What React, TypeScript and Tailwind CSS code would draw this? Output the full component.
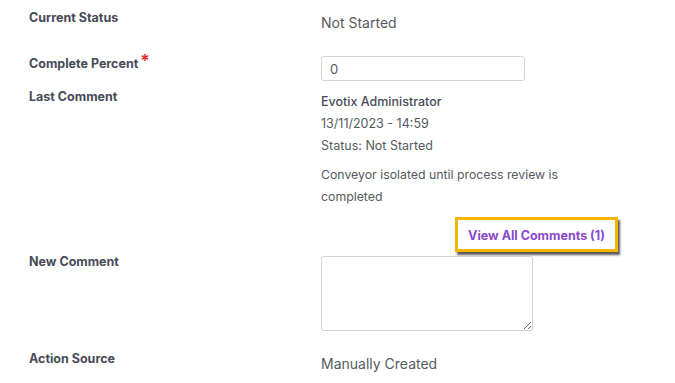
import { FC } from 'react';

const Label: FC<{ text: string; required?: boolean }> = ({ text, required }) => (
  <div className="w-[292px] shrink-0 text-[12.5px] leading-[16px] font-bold text-[#474b57]">
    {text}
    {required && <span className="text-[#e0322d] text-[17px] leading-none relative top-[-1px] ml-[2px]">*</span>}
  </div>
);

const App: FC = () => {
  return (
    <div className="w-[675px] h-[383px] bg-white pl-[29px] pt-[10px] overflow-hidden font-['Inter','Liberation_Sans',sans-serif]">
      <div className="flex h-[44px]">
        <Label text="Current Status" />
        <div className="pt-[3px] text-[14px] leading-[20px] text-[#555a60]">Not Started</div>
      </div>

      <div className="flex h-[35px]">
        <Label text="Complete Percent" required />
        <input
          readOnly
          value="0"
          className="mt-[2px] w-[204px] h-[25px] border border-[#cfd2d6] rounded-[3px] px-[8px] text-[13px] text-[#555a60] outline-none"
        />
      </div>

      <div className="flex mb-[2px]">
        <Label text="Last Comment" />
        <div className="pt-[2px] text-[12.5px] leading-[22px] text-[#555a60]">
          <p className="font-medium text-[#474b57]">Evotix Administrator</p>
          <p>13/11/2023 - 14:59</p>
          <p>Status: Not Started</p>
          <p className="mt-[7px] w-[260px] text-[12.3px]">Conveyor isolated until process review is completed</p>
          <div className="mt-[9px] ml-[134px] w-[163px] h-[35px] border-[3px] border-[#f5b400] shadow-[2px_3px_2px_rgba(0,0,0,0.65)] flex items-center justify-center">
            <span className="pt-[2px] text-[12.5px] font-bold text-[#8a4bcb]">View All Comments (1)</span>
          </div>
        </div>
      </div>

      <div className="flex h-[97px]">
        <Label text="New Comment" />
        <textarea className="mt-[2px] w-[212px] h-[75px] border border-[#cfd2d6] rounded-[3px] outline-none resize" />
      </div>

      <div className="flex">
        <Label text="Action Source" />
        <div className="pt-[3px] text-[14px] leading-[20px] text-[#555a60]">Manually Created</div>
      </div>
    </div>
  );
};

export default App;
